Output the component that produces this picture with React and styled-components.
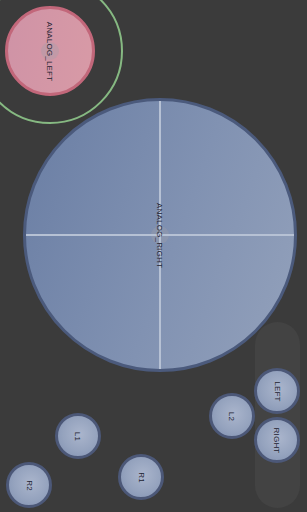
import styled, { createGlobalStyle } from 'styled-components';

const Global = createGlobalStyle`
  html, body {
    margin: 0;
    padding: 0;
    background: #3b3b3b;
    overflow: hidden;
  }
`;

const Pad = styled.div`
  position: relative;
  width: 307px;
  height: 512px;
  background: #3b3b3b;
  overflow: hidden;
  font-family: 'Liberation Sans', Arial, sans-serif;
`;

const Ring = styled.div`
  position: absolute;
  left: ${(p) => p.$x - p.$r}px;
  top: ${(p) => p.$y - p.$r}px;
  width: ${(p) => p.$r * 2}px;
  height: ${(p) => p.$r * 2}px;
  border-radius: 50%;
  border: 2px solid #86b982;
  box-sizing: border-box;
`;

const Stick = styled.div`
  position: absolute;
  left: ${(p) => p.$x - p.$r}px;
  top: ${(p) => p.$y - p.$r}px;
  width: ${(p) => p.$r * 2}px;
  height: ${(p) => p.$r * 2}px;
  border-radius: 50%;
  box-sizing: border-box;
  display: flex;
  align-items: center;
  justify-content: center;
  overflow: hidden;
  ${(p) =>
    p.$pink
      ? `
    background: linear-gradient(100deg, #cf93a6 0%, #d89aa6 100%);
    border: 3px solid #c2677a;
  `
      : `
    background: linear-gradient(110deg, #6a7ea4 0%, #8192b2 55%, #93a1bb 100%);
    border: 3px solid #4b5a7c;
  `}
`;

const CenterDot = styled.div`
  position: absolute;
  width: 18px;
  height: 18px;
  border-radius: 50%;
  background: rgba(160, 160, 170, 0.35);
`;

const CrossV = styled.div`
  position: absolute;
  left: 50%;
  top: 0;
  bottom: 0;
  width: 2px;
  margin-left: -1px;
  background: #b6c1d4;
`;

const CrossH = styled.div`
  position: absolute;
  top: 50%;
  left: 0;
  right: 0;
  height: 2px;
  margin-top: -1px;
  background: #b6c1d4;
`;

const Label = styled.span`
  position: relative;
  transform: rotate(90deg);
  white-space: nowrap;
  font-size: ${(p) => p.$size || 8}px;
  color: #1e2230;
  letter-spacing: 0.2px;
`;

const Rail = styled.div`
  position: absolute;
  left: 255px;
  top: 322px;
  width: 45px;
  height: 186px;
  border-radius: 23px;
  background: #434343;
`;

const Button = styled.div`
  position: absolute;
  left: ${(p) => p.$x - 23}px;
  top: ${(p) => p.$y - 23}px;
  width: 46px;
  height: 46px;
  border-radius: 50%;
  box-sizing: border-box;
  border: 3px solid #4c5878;
  background: radial-gradient(circle at 55% 45%, #aab5cc 0%, #95a3be 55%, #7f8fb0 100%);
  display: flex;
  align-items: center;
  justify-content: center;
`;

const buttons = [
  { name: 'LEFT', x: 277, y: 391 },
  { name: 'RIGHT', x: 277, y: 440 },
  { name: 'L2', x: 232, y: 416 },
  { name: 'L1', x: 78, y: 436 },
  { name: 'R1', x: 141, y: 477 },
  { name: 'R2', x: 29, y: 485 },
];

const App = () => {
  return (
    <Pad>
      <Global />
      <Ring $x={50} $y={51} $r={73} />
      <Stick $pink $x={50} $y={51} $r={45}>
        <CenterDot />
        <Label>ANALOG_LEFT</Label>
      </Stick>
      <Stick $x={160} $y={235} $r={137}>
        <CenterDot />
        <CrossV />
        <CrossH />
        <Label>ANALOG_RIGHT</Label>
      </Stick>
      <Rail />
      {buttons.map((b) => (
        <Button key={b.name} $x={b.x} $y={b.y}>
          <Label>{b.name}</Label>
        </Button>
      ))}
    </Pad>
  );
};

export default App;
